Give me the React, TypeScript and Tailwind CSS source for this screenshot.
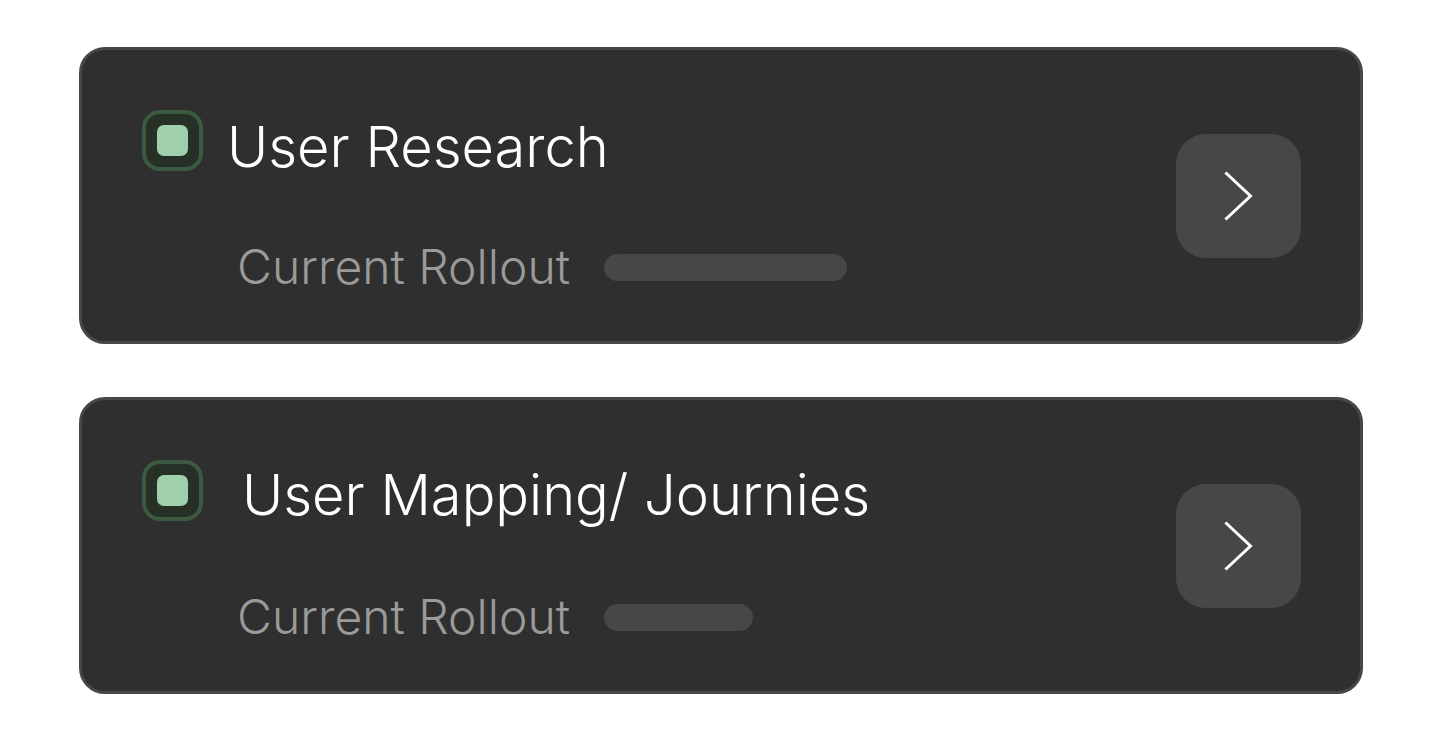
import React from "react";

type Task = {
  title: string;
  titleGap: string;
  titleTop: string;
  barWidth: string;
};

const tasks: Task[] = [
  { title: "User Research", titleGap: "ml-[24px]", titleTop: "mt-[9px]", barWidth: "w-[243px]" },
  { title: "User Mapping/ Journies", titleGap: "ml-[39px]", titleTop: "mt-[7px]", barWidth: "w-[149px]" },
];

function Chevron() {
  return (
    <svg width="30" height="50" viewBox="0 0 30 50" fill="none" aria-hidden="true">
      <path d="M2.5 2.5 L26.5 25 L2.5 47.5" stroke="#ffffff" strokeWidth="3" strokeLinecap="square" />
    </svg>
  );
}

function Checkbox() {
  return (
    <div className="flex h-[61px] w-[61px] shrink-0 items-center justify-center rounded-[18px] border-[4px] border-[#3b5a41] bg-[#263026]">
      <div className="h-[31px] w-[31px] rounded-[7px] bg-[#9fcfad]" />
    </div>
  );
}

function TaskCard({ task }: { task: Task }) {
  return (
    <div className="flex h-[297px] justify-between rounded-[26px] border-[3px] border-[#474747] bg-[#2f2f2f] pl-[60px] pr-[59px]">
      <div className="flex flex-col pt-[60px]">
        <div className="flex h-[65px] items-start">
          <Checkbox />
          <span className={`${task.titleGap} ${task.titleTop} text-[56px] font-light leading-none text-white`}>
            {task.title}
          </span>
        </div>
        <div className="ml-[95px] mt-[68px] flex items-center gap-[34px]">
          <span className="text-[48px] font-light leading-none text-[#9a9a9a]">Current Rollout</span>
          <div className={`${task.barWidth} h-[27px] rounded-full bg-[#474747]`} />
        </div>
      </div>
      <div className="flex items-center">
        <button className="flex h-[124px] w-[125px] items-center justify-center rounded-[30px] bg-[#474747]">
          <Chevron />
        </button>
      </div>
    </div>
  );
}

export default function App() {
  return (
    <div className="min-h-[743px] bg-white px-[79px] pt-[47px] font-['Inter',sans-serif]" style={{ width: 1443 }}>
      <div className="flex w-[1284px] flex-col gap-[53px]">
        {tasks.map((task) => (
          <TaskCard key={task.title} task={task} />
        ))}
      </div>
    </div>
  );
}
